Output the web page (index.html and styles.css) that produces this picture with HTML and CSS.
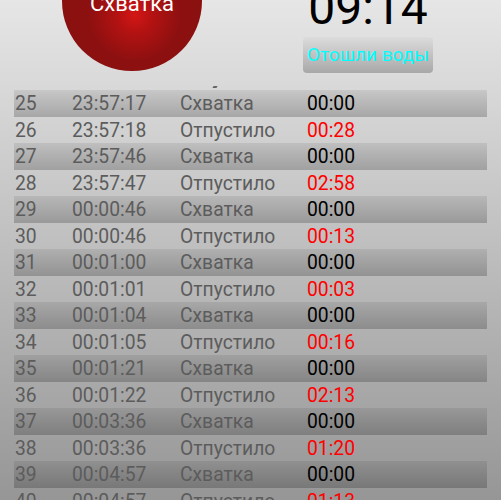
FILE: index.html
```html
<!DOCTYPE html>
<html lang="ru">
<head>
<meta charset="utf-8">
<link rel="stylesheet" href="styles.css">
</head>
<body>
<div class="screen">
  <header class="top">
    <div class="left">
      <div class="bigbtn"><span class="bigbtn-label">Схватка</span></div>
    </div>
    <div class="right">
      <div class="clock">09:14</div>
      <div class="water">Отошли воды</div>
    </div>
  </header>
  <span class="tick"></span>
  <div class="list">
    <div class="row odd"><span>25</span><span>23:57:17</span><span>Схватка</span><span class="dur">00:00</span></div>
    <div class="row"><span>26</span><span>23:57:18</span><span>Отпустило</span><span class="dur red">00:28</span></div>
    <div class="row odd"><span>27</span><span>23:57:46</span><span>Схватка</span><span class="dur">00:00</span></div>
    <div class="row"><span>28</span><span>23:57:47</span><span>Отпустило</span><span class="dur red">02:58</span></div>
    <div class="row odd"><span>29</span><span>00:00:46</span><span>Схватка</span><span class="dur">00:00</span></div>
    <div class="row"><span>30</span><span>00:00:46</span><span>Отпустило</span><span class="dur red">00:13</span></div>
    <div class="row odd"><span>31</span><span>00:01:00</span><span>Схватка</span><span class="dur">00:00</span></div>
    <div class="row"><span>32</span><span>00:01:01</span><span>Отпустило</span><span class="dur red">00:03</span></div>
    <div class="row odd"><span>33</span><span>00:01:04</span><span>Схватка</span><span class="dur">00:00</span></div>
    <div class="row"><span>34</span><span>00:01:05</span><span>Отпустило</span><span class="dur red">00:16</span></div>
    <div class="row odd"><span>35</span><span>00:01:21</span><span>Схватка</span><span class="dur">00:00</span></div>
    <div class="row"><span>36</span><span>00:01:22</span><span>Отпустило</span><span class="dur red">02:13</span></div>
    <div class="row odd"><span>37</span><span>00:03:36</span><span>Схватка</span><span class="dur">00:00</span></div>
    <div class="row"><span>38</span><span>00:03:36</span><span>Отпустило</span><span class="dur red">01:20</span></div>
    <div class="row odd"><span>39</span><span>00:04:57</span><span>Схватка</span><span class="dur">00:00</span></div>
    <div class="row"><span>40</span><span>00:04:57</span><span>Отпустило</span><span class="dur red">01:13</span></div>
  </div>
</div>
</body>
</html>
```

FILE: styles.css
```css
html, body {
  margin: 0;
  padding: 0;
  height: 100%;
  overflow: hidden;
}
body {
  font-family: Roboto, "Noto Sans", sans-serif;
  background: linear-gradient(to bottom, #e6e6e6 0px, #d8d8d8 90px, #969696 500px);
}
.screen {
  position: relative;
  width: 501px;
  height: 500px;
}
.top {
  display: flex;
  height: 90px;
}
.left {
  width: 264px;
  display: flex;
  justify-content: center;
}
.bigbtn {
  width: 140px;
  height: 140px;
  margin-top: -69px;
  border-radius: 50%;
  background: radial-gradient(circle at 52% 60%, #d41616 0px, #b31212 18px, #8d1010 46px, #8a1010 70px);
  display: flex;
  justify-content: center;
}
.bigbtn-label {
  color: #ffffff;
  font-size: 22px;
  line-height: 26px;
  margin-top: 60px;
}
.right {
  width: 208px;
  display: flex;
  flex-direction: column;
  align-items: center;
}
.clock {
  font-size: 48px;
  line-height: 48px;
  height: 48px;
  margin-top: -16px;
  color: #000;
}
.water {
  margin-top: 5px;
  width: 130px;
  height: 36px;
  border-radius: 4px;
  background: linear-gradient(to bottom, #dcdcdc, #a8a8a8);
  color: #00ffff;
  font-size: 19px;
  line-height: 36px;
  text-align: center;
  white-space: nowrap;
}
.tick {
  position: absolute;
  left: 213px;
  top: 86px;
  width: 4px;
  height: 2px;
  background: #666;
  transform: skewX(-30deg);
}
.list {
  margin: 0 14px;
}
.row {
  box-sizing: border-box;
  display: grid;
  grid-template-columns: 57px 108px 127px 1fr;
  padding-left: 1px;
  padding-top: 1px;
  height: 26.5px;
  line-height: 25.5px;
  font-size: 19.3px;
  color: #5c5c5c;
  white-space: nowrap;
}
.row.odd {
  background: linear-gradient(to bottom, rgba(0,0,0,0.08), rgba(0,0,0,0.21));
}
.dur {
  color: #000;
}
.dur.red {
  color: #ff0000;
}
```
